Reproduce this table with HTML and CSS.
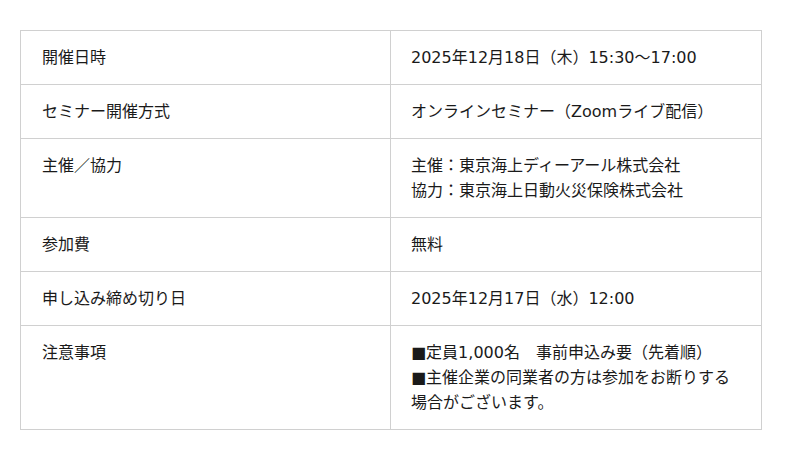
FILE: index.html
```html
<!DOCTYPE html>
<html lang="ja">
<head>
<meta charset="utf-8">
<link rel="stylesheet" href="styles.css">
</head>
<body>
<table class="info">
  <tr><th>開催日時</th><td>2025年12月18日（木）15:30〜17:00</td></tr>
  <tr><th>セミナー開催方式</th><td>オンラインセミナー（Zoomライブ配信）</td></tr>
  <tr><th>主催／協力</th><td>主催：東京海上ディーアール株式会社<br>協力：東京海上日動火災保険株式会社</td></tr>
  <tr><th>参加費</th><td>無料</td></tr>
  <tr><th>申し込み締め切り日</th><td>2025年12月17日（水）12:00</td></tr>
  <tr><th>注意事項</th><td>■定員1,000名　事前申込み要（先着順）<br>■主催企業の同業者の方は参加をお断りする場合がございます。</td></tr>
</table>
</body>
</html>
```
FILE: styles.css
```css
html, body {
  margin: 0;
  background: #fff;
}
body {
  padding: 30px 20px;
  font-family: "DejaVu Sans", "Noto Sans CJK JP", sans-serif;
  font-size: 16px;
  line-height: 25px;
  color: #1a1a1a;
}
.info {
  border-collapse: collapse;
  width: 742px;
  table-layout: fixed;
}
.info th, .info td {
  border: 1px solid #d0d0d0;
  padding: 14px 20px 14px 20px;
  text-align: left;
  vertical-align: top;
  font-weight: normal;
}
.info th {
  width: 329px;
  padding-left: 21px;
  padding-right: 19px;
}
```
